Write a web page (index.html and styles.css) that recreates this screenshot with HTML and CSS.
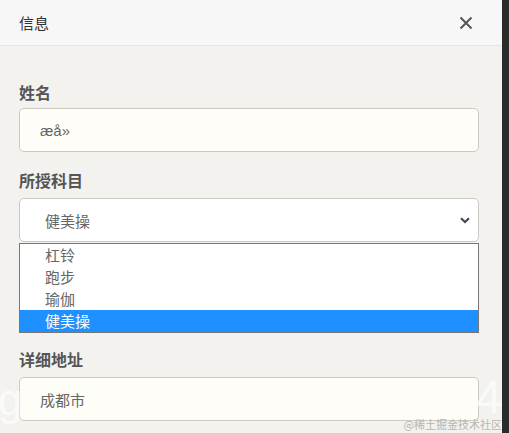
FILE: index.html
```html
<!DOCTYPE html>
<html lang="zh">
<head>
<meta charset="utf-8">
<link rel="stylesheet" href="styles.css">
</head>
<body>
<div class="screen">
  <div class="dialog">
    <div class="header">
      <span class="title">信息</span>
      <svg class="close" width="14" height="14" viewBox="0 0 14 14"><path d="M1.5 1.5 L12.5 12.5 M12.5 1.5 L1.5 12.5" stroke="#555" stroke-width="2" fill="none"/></svg>
    </div>
    <div class="content">
      <div class="label first">姓名</div>
      <div class="input">æå»</div>
      <div class="label second">所授科目</div>
      <div class="select">
        <span>健美操</span>
        <svg class="chev" width="10" height="7" viewBox="0 0 10 7"><path d="M1 1.2 L5 5 L9 1.2" stroke="#444" stroke-width="2" fill="none"/></svg>
      </div>
      <div class="listbox">
        <div class="opt">杠铃</div>
        <div class="opt">跑步</div>
        <div class="opt">瑜伽</div>
        <div class="opt sel">健美操</div>
      </div>
      <div class="label third">详细地址</div>
      <div class="input">成都市</div>
    </div>
    <div class="ghost g">g</div>
    <div class="ghost four">4</div>
    <div class="wm">@稀土掘金技术社区</div>
  </div>
  <div class="strip"></div>
</div>
</body>
</html>
```

FILE: styles.css
```css
html, body {
  margin: 0;
  padding: 0;
  width: 509px;
  height: 433px;
  overflow: hidden;
  font-family: "Noto Sans CJK SC", "Noto Sans", sans-serif;
}
.screen {
  display: flex;
  height: 433px;
}
.dialog {
  position: relative;
  width: 502px;
  height: 433px;
  background: #f3f2ef;
  overflow: hidden;
}
.strip {
  flex: 1;
  background: #2b2b2b;
}
.header {
  height: 45px;
  background: #f7f7f7;
  border-bottom: 1px solid #e6e6e6;
  display: flex;
  align-items: center;
  justify-content: space-between;
  padding: 0 29px 0 19px;
}
.title {
  font-size: 15px;
  color: #333;
  line-height: 20px;
}
.close {
  display: block;
}
.content {
  padding: 35px 23px 0 19px;
}
.label {
  font-size: 16px;
  font-weight: bold;
  color: #555;
  line-height: 22px;
  margin-bottom: 7px;
}
.label.first { margin-bottom: 5px; }
.label.second { margin-top: 17px; }
.label.third { margin-top: 15px; }
.input {
  height: 44px;
  box-sizing: border-box;
  border: 1px solid #ccc9c2;
  border-radius: 5px;
  background: #fffdf7;
  padding-left: 20px;
  display: flex;
  align-items: center;
  font-size: 15px;
  color: #666;
  font-family: "Liberation Sans", "Noto Sans CJK SC", sans-serif;
}
.select {
  height: 44px;
  box-sizing: border-box;
  border: 1px solid #ccc9c2;
  border-radius: 5px;
  background: #fff;
  padding: 0 8px 0 25px;
  display: flex;
  align-items: center;
  justify-content: space-between;
  font-size: 15px;
  color: #666;
}
.chev { display: block; }
.listbox {
  margin-top: 1px;
  border: 1px solid #767676;
  background: #fff;
}
.opt {
  height: 22px;
  line-height: 22px;
  padding-left: 25px;
  font-size: 15px;
  color: #666;
}
.opt.sel {
  background: #1e90ff;
  color: #fff;
}
.ghost {
  position: absolute;
  font-family: "Liberation Sans", sans-serif;
  font-size: 44px;
  color: rgba(255, 255, 255, 0.7);
  line-height: 1;
}
.ghost.g { left: -2px; top: 378px; }
.ghost.four { left: 476px; top: 374px; font-size: 46px; }
.wm {
  position: absolute;
  right: 0;
  top: 417px;
  font-size: 11px;
  line-height: 14px;
  color: #b8b6b2;
  white-space: nowrap;
}
```
